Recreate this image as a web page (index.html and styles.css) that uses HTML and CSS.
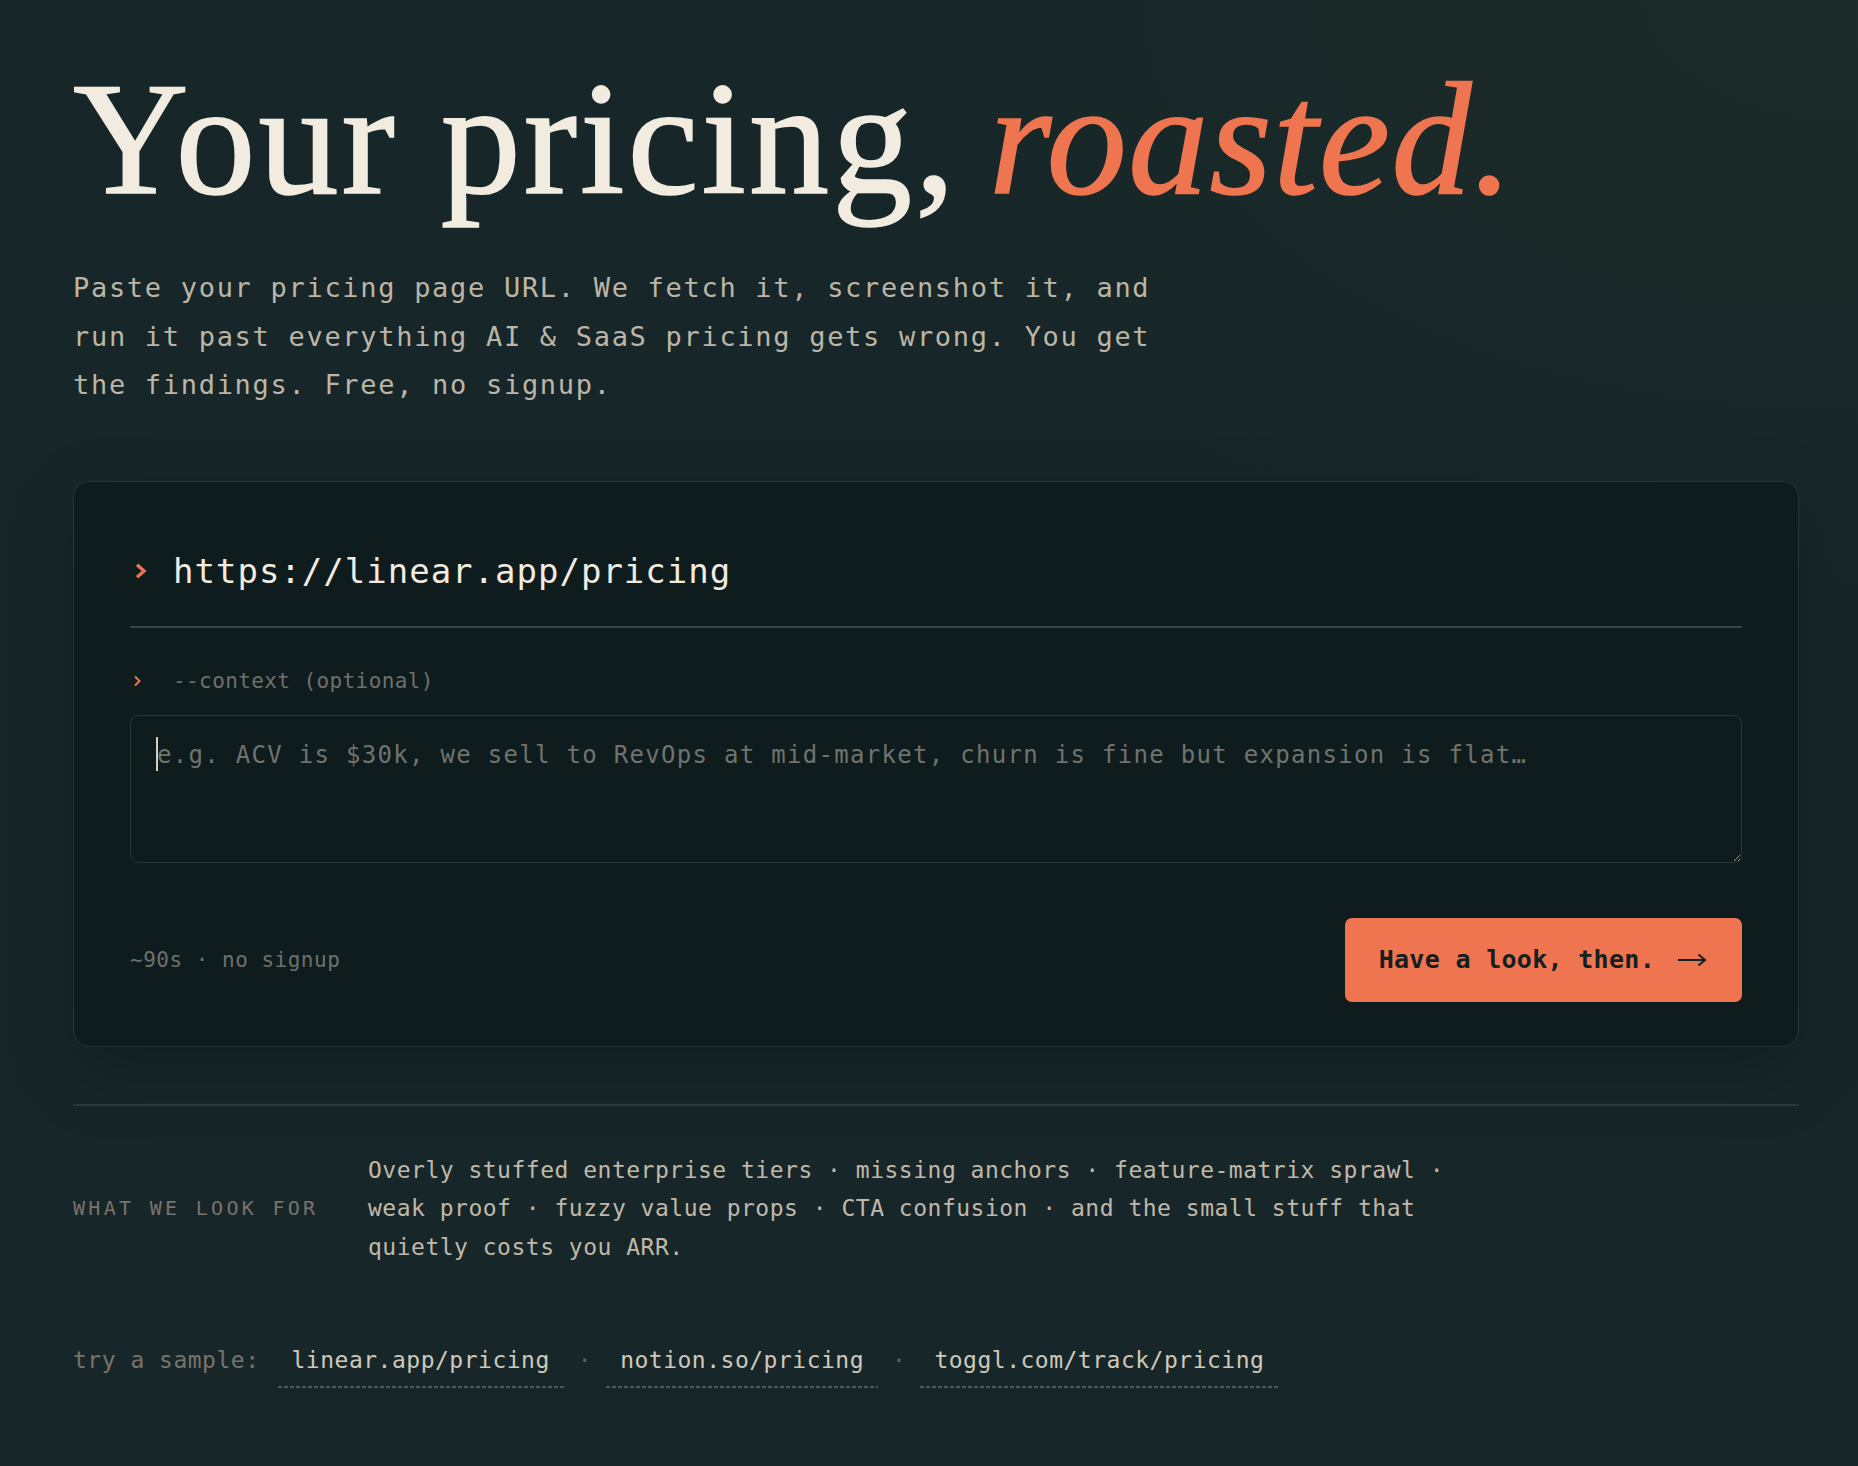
FILE: index.html
```html
<!DOCTYPE html>
<html lang="en">
<head>
<meta charset="utf-8">
<title>Your pricing, roasted.</title>
<link rel="stylesheet" href="styles.css">
</head>
<body>
<main class="page">
  <h1 class="headline">Your pricing, <em>roasted.</em></h1>
  <p class="lede">Paste your pricing page URL. We fetch it, screenshot it, and run it past everything AI &amp; SaaS pricing gets wrong. You get the findings. Free, no signup.</p>

  <form class="card">
    <div class="url-row">
      <span class="prompt"><svg class="chev-lg" width="16" height="18" viewBox="0 0 16 18"><path d="M6 2.8 L13 9 L6 15.2" fill="none" stroke="#ee754f" stroke-width="3.4" stroke-linecap="butt" stroke-linejoin="miter"/></svg></span>
      <input class="url-input" type="text" value="https://linear.app/pricing">
    </div>

    <div class="ctx-label">
      <span class="prompt"><svg class="chev-sm" width="10" height="12" viewBox="0 0 10 12"><path d="M4 1.5 L8.5 6 L4 10.5" fill="none" stroke="#ee754f" stroke-width="2"/></svg></span>
      <span>--context (optional)</span>
    </div>

    <div class="ctx-box">
      <textarea class="ctx-input" placeholder="e.g. ACV is $30k, we sell to RevOps at mid-market, churn is fine but expansion is flat…"></textarea>
      <span class="caret"></span>
    </div>

    <div class="card-foot">
      <span class="meta">~90s · no signup</span>
      <button class="cta" type="button">Have a look, then.<svg class="arrow" width="30" height="14" viewBox="0 0 30 14"><path d="M1 7 H28 M21.5 1.5 L28 7 L21.5 12.5" fill="none" stroke="currentColor" stroke-width="2"/></svg></button>
    </div>
  </form>

  <hr class="rule">

  <section class="looks">
    <div class="looks-label">What we look for</div>
    <p class="looks-text">Overly stuffed enterprise tiers · missing anchors · feature-matrix sprawl · weak proof · fuzzy value props · CTA confusion · and the small stuff that quietly costs you ARR.</p>
  </section>

  <div class="samples">
    <span class="samples-label">try a sample:</span>
    <a class="sample" href="#">linear.app/pricing</a>
    <span class="sep">·</span>
    <a class="sample" href="#">notion.so/pricing</a>
    <span class="sep">·</span>
    <a class="sample" href="#">toggl.com/track/pricing</a>
  </div>
</main>
</body>
</html>
```

FILE: styles.css
```css
* { box-sizing: border-box; }

html, body {
  margin: 0;
  padding: 0;
}

body {
  min-height: 1466px;
  background-color: #172729;
  background-image:
    radial-gradient(ellipse 55% 40% at 100% 0%, rgba(30, 44, 40, 0.8), rgba(30, 44, 40, 0) 100%);
  font-family: "DejaVu Sans Mono", "Liberation Mono", monospace;
  color: #bdb5a6;
}

.page {
  padding: 59px 59px 80px 73px;
}

.headline {
  margin: 0;
  font-family: "Liberation Serif", "DejaVu Serif", serif;
  font-weight: 400;
  font-size: 160px;
  line-height: 160px;
  color: #f1ebe0;
  letter-spacing: 3px;
  -webkit-text-stroke: 1.6px currentColor;
}

.headline em {
  margin-left: -12px;
  font-style: italic;
  color: #ee754f;
  letter-spacing: 1.4px;
}

.lede {
  margin: 45px 0 0;
  max-width: 1110px;
  font-size: 27px;
  line-height: 48.5px;
  letter-spacing: 1.7px;
  color: #bdb5a6;
}

.card {
  margin: 71px 0 0;
  padding: 56px 56px 44px;
  background: #0f1c1d;
  border: 1px solid #253533;
  border-radius: 16px;
  box-shadow: 0 24px 70px rgba(0, 0, 0, 0.22);
}

.url-row {
  display: flex;
  align-items: center;
  padding: 13px 0 34px;
  border-bottom: 2px solid #394542;
}

.prompt {
  flex: none;
  width: 43px;
  display: flex;
  align-items: center;
}

.chev-lg { margin-left: 1px; }
.chev-sm { margin-left: 1px; }

.url-input {
  flex: 1;
  min-width: 0;
  height: 41px;
  padding: 0;
  margin: 0;
  border: 0;
  outline: none;
  background: transparent;
  font-family: "DejaVu Sans Mono", "Liberation Mono", monospace;
  font-size: 34px;
  line-height: 41px;
  letter-spacing: 1px;
  color: #f1ebe0;
}

.ctx-label {
  display: flex;
  align-items: center;
  margin-top: 39px;
  font-size: 21px;
  line-height: 28px;
  letter-spacing: 0.4px;
  color: #6d716c;
}

.ctx-box {
  position: relative;
  margin-top: 20px;
}

.ctx-input {
  display: block;
  width: 100%;
  height: 148px;
  margin: 0;
  padding: 21px 26px;
  background: #0f1c1d;
  border: 1px solid #2a3836;
  border-radius: 8px;
  outline: none;
  resize: vertical;
  color-scheme: dark;
  font-family: "DejaVu Sans Mono", "Liberation Mono", monospace;
  font-size: 24px;
  line-height: 36px;
  letter-spacing: 1.3px;
  color: #e6dfd2;
}

.ctx-input::placeholder {
  color: #6f736e;
  opacity: 1;
}

.caret {
  position: absolute;
  left: 26px;
  top: 22px;
  width: 2px;
  height: 34px;
  background: #d6ceba;
}

.card-foot {
  display: flex;
  align-items: center;
  justify-content: space-between;
  margin-top: 55px;
}

.meta {
  font-size: 21px;
  letter-spacing: 0.5px;
  color: #6d716c;
}

.cta {
  display: inline-flex;
  align-items: center;
  height: 84px;
  padding: 0 35px 0 34px;
  border: 0;
  border-radius: 7px;
  background: #ee754f;
  color: #13201f;
  font-family: "DejaVu Sans Mono", "Liberation Mono", monospace;
  font-size: 25px;
  font-weight: 700;
  letter-spacing: 0.3px;
  cursor: pointer;
}

.arrow {
  margin-left: 22px;
}

.rule {
  margin: 57px 0 0;
  height: 0;
  border: 0;
  border-top: 2px solid #2a3a38;
}

.looks {
  display: grid;
  grid-template-columns: 295px 1fr;
  align-items: center;
  margin-top: 45px;
}

.looks-label {
  font-size: 20px;
  line-height: 26px;
  letter-spacing: 3.3px;
  text-transform: uppercase;
  color: #77746a;
}

.looks-text {
  margin: 0;
  max-width: 1110px;
  font-size: 23px;
  line-height: 38.5px;
  letter-spacing: 0.5px;
  color: #c0b8a9;
}

.samples {
  display: flex;
  align-items: baseline;
  gap: 14px;
  margin-top: 75px;
  font-size: 23px;
  line-height: 38.5px;
  letter-spacing: 0.5px;
}

.samples-label {
  color: #77746a;
  margin-right: 4px;
}

.sample {
  display: inline-block;
  padding: 0 14px 8px;
  background-image: repeating-linear-gradient(to right, #4d5956 0 4px, transparent 4px 6px);
  background-size: 100% 2px;
  background-position: left bottom;
  background-repeat: no-repeat;
  color: #d0c8ba;
  text-decoration: none;
}

.sep {
  color: #5c615c;
}
```
